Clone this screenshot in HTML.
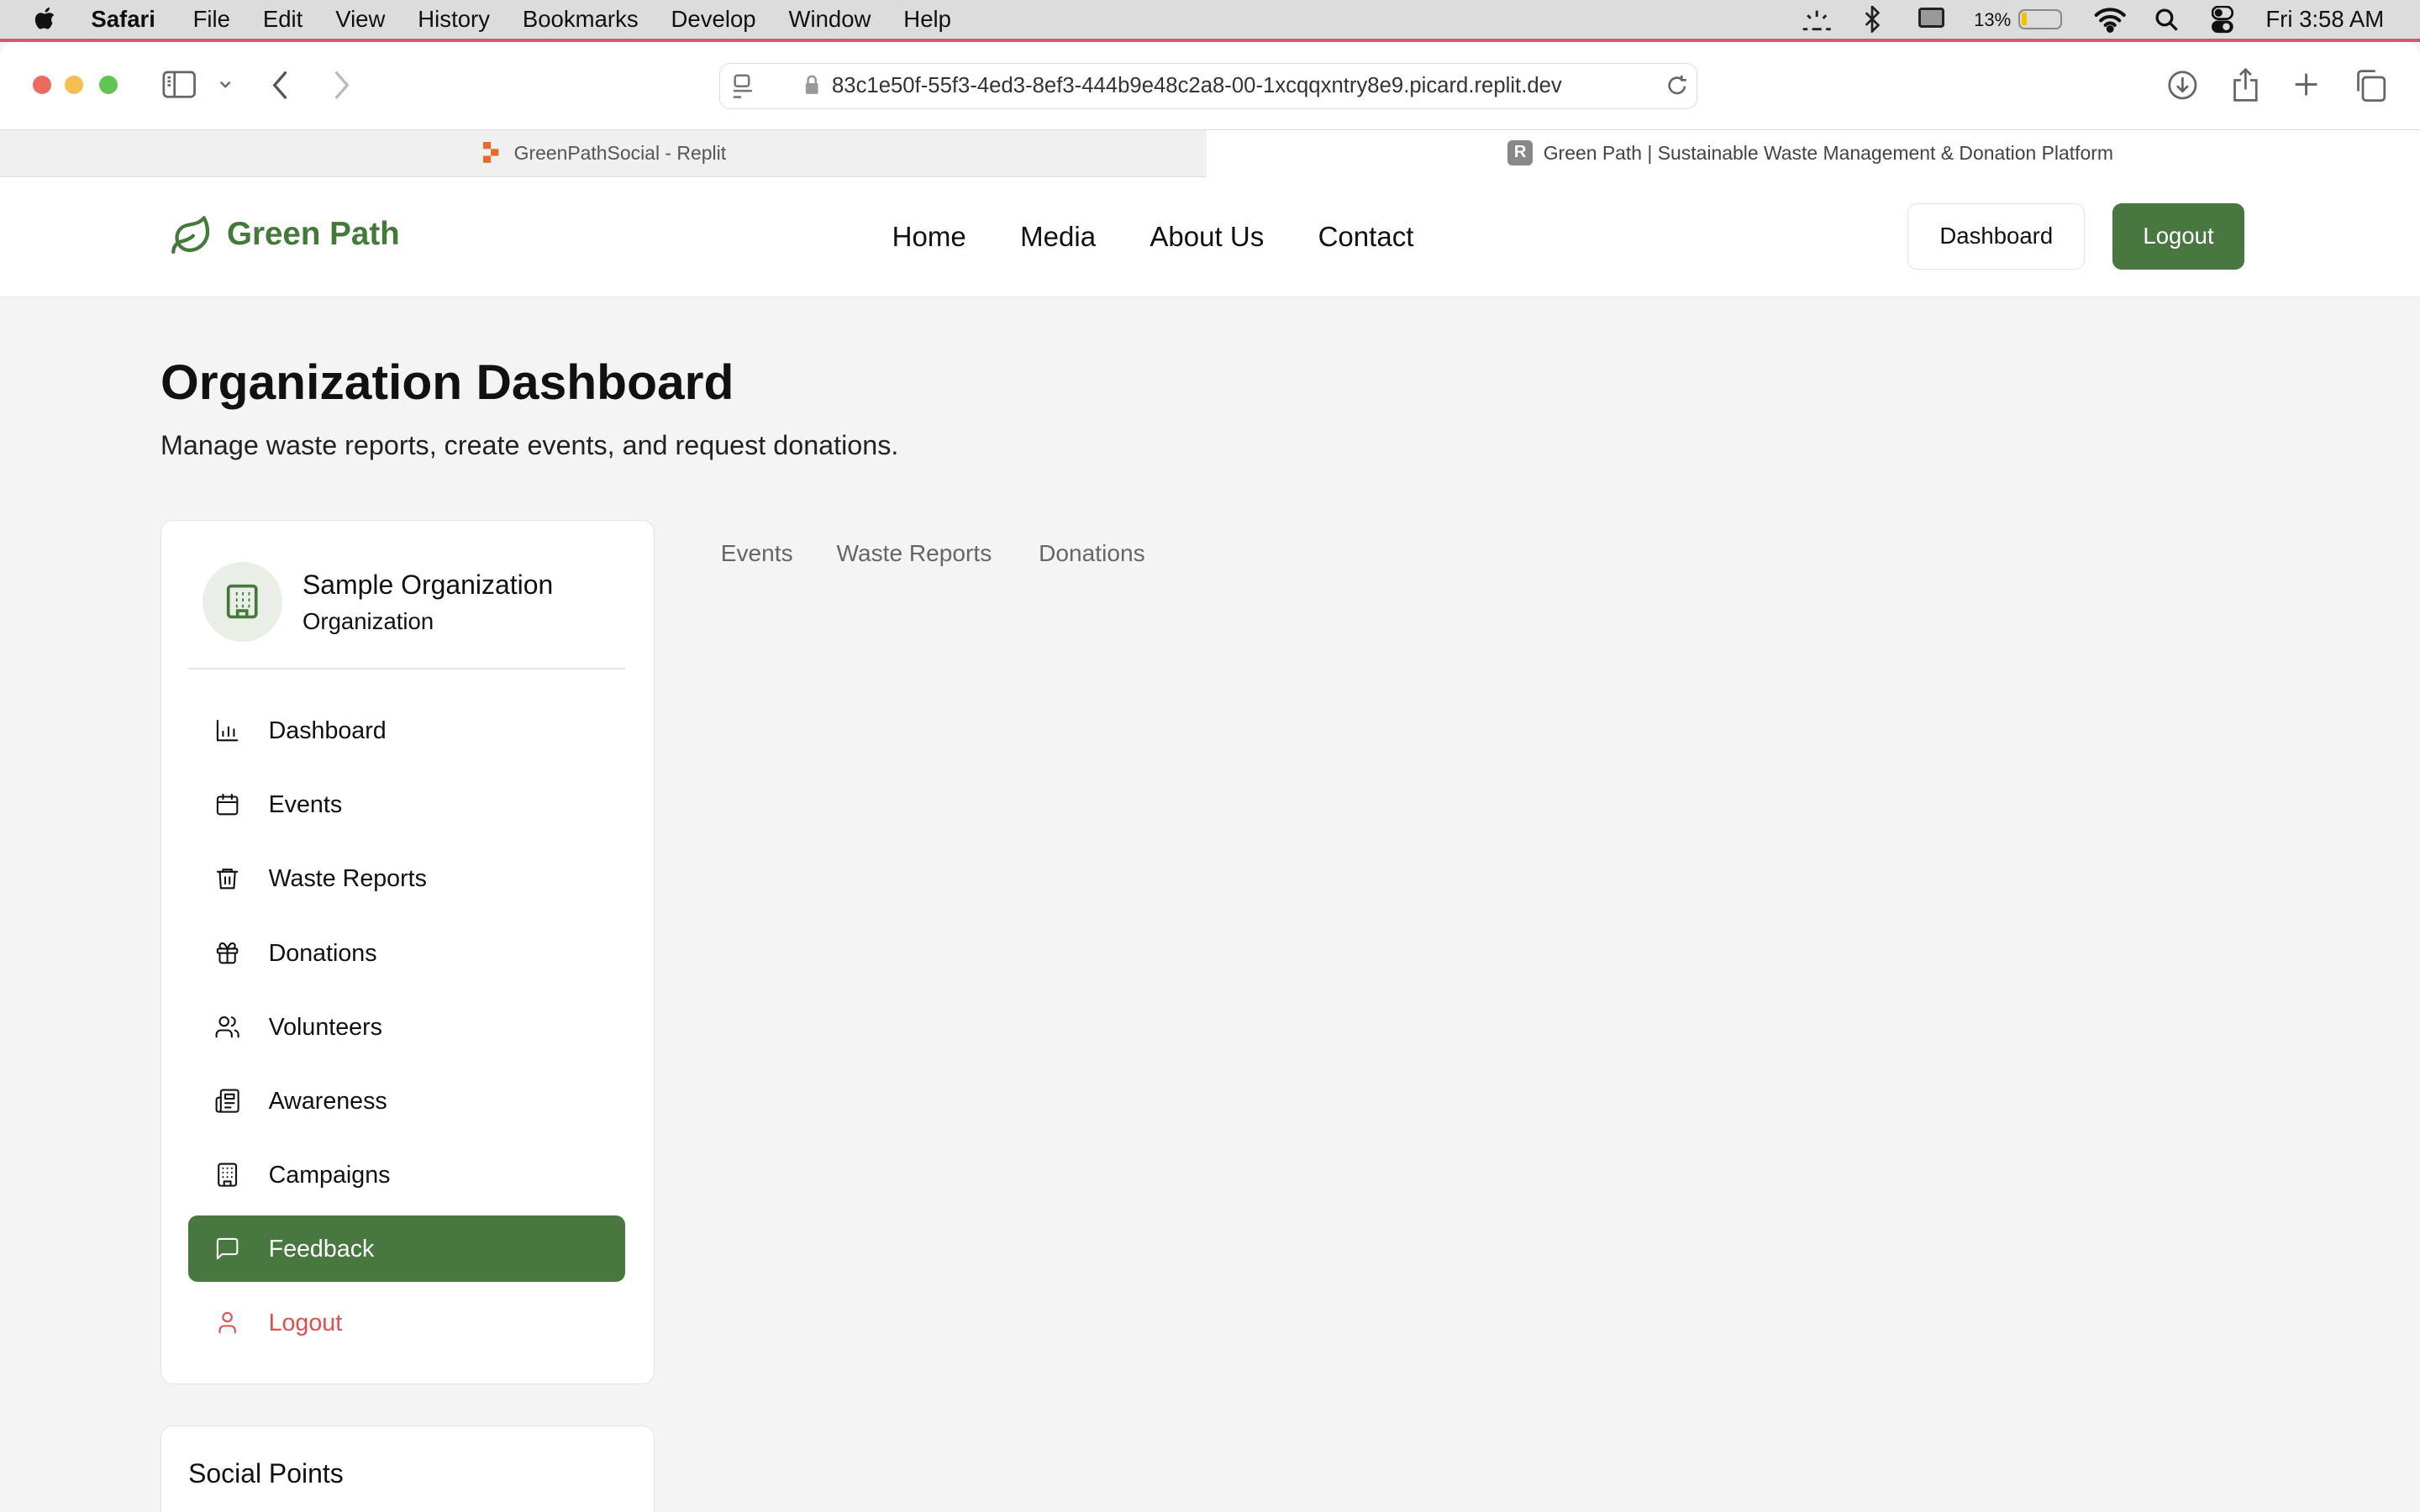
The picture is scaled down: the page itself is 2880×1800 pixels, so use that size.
<!DOCTYPE html>
<html><head><meta charset="utf-8"><style>
*{margin:0;padding:0;box-sizing:border-box}
html,body{width:2880px;height:1800px;overflow:hidden;background:#f4f4f4}
#r{zoom:1.83673;width:1568px;height:980px;position:relative;font-family:"Liberation Sans",sans-serif;color:#111}
.a{position:absolute;white-space:nowrap}
svg{position:absolute}
.mi{position:absolute;left:174px;font-size:15.6px;color:#111}
.ic{left:139px;width:17px;height:17px;fill:none;stroke:#111;stroke-width:1.6;stroke-linecap:round;stroke-linejoin:round}
</style></head><body><div id="r">
<!-- menubar -->
<div class="a" style="left:0;top:0;width:1568px;height:25px;background:#dcdcdc"></div>
<svg style="left:22px;top:4px" width="14" height="17" viewBox="0 0 14 17"><path d="M11.5 9c0-2 1.6-2.9 1.7-3-1-1.4-2.4-1.5-2.9-1.5-1.2-.1-2.4.7-3 .7s-1.6-.7-2.6-.7C3.300 4.500 1 5.600 1 9c0 1.5.5 3 1.200 4.100.6.9 1.300 1.900 2.200 1.900.9 0 1.200-.6 2.300-.6s1.400.6 2.300.6c1 0 1.600-.9 2.200-1.800.7-1 1-2 1-2.100C12.200 11 11.500 10.300 11.500 9zM9.600 3.200C10.100 2.600 10.400 1.800 10.300 1c-.7 0-1.600.5-2.100 1.100-.5.5-.9 1.300-.8 2.100.8.1 1.600-.4 2.200-1z" fill="#111"/></svg>
<div class="a" style="left:59px;top:4px;font-size:15px;font-weight:bold">Safari</div>
<div class="a" style="left:125px;top:4px;font-size:15px;word-spacing:17px">File Edit View History Bookmarks Develop Window Help</div>
<svg style="left:1166px;top:5px" width="22" height="16" viewBox="0 0 22 16" stroke="#222" stroke-width="1.6" fill="none"><path d="M11 2v4M5 5l2 2M17 5l-2 2M2 14h3M8 14h6M17 14h3"/></svg>
<svg style="left:1207px;top:4px" width="12" height="17" viewBox="0 0 12 17" stroke="#222" stroke-width="1.5" fill="none"><path d="M2 4.5l8 8-4 4V.5l4 4-8 8"/></svg>
<div class="a" style="left:1279px;top:6px;font-size:12px">13%</div>
<div class="a" style="left:1308px;top:6px;width:28px;height:13px;border:1.5px solid #888;border-radius:4px"><div style="width:3px;height:8px;margin:1px;background:#f2c200"></div></div>
<div class="a" style="left:1243px;top:5px;width:17px;height:13px;background:#999;border:2px solid #222;border-radius:2px"></div>
<svg style="left:1356px;top:4px" width="22" height="17" viewBox="0 0 22 17" fill="none" stroke="#111" stroke-width="2.2" stroke-linecap="round"><path d="M2 6a13 13 0 0 1 18 0M5 9.5a8.500 8.500 0 0 1 12 0M8 12.500a4 4 0 0 1 6 0"/><circle cx="11" cy="15" r="1.3" fill="#111"/></svg>
<svg style="left:1396px;top:5px" width="16" height="16" viewBox="0 0 16 16" fill="none" stroke="#111" stroke-width="1.8"><circle cx="6.500" cy="6.500" r="4.800"/><path d="M10 10l4.500 4.500"/></svg>
<svg style="left:1433px;top:4px" width="14" height="18" viewBox="0 0 14 18"><rect x="0.500" y="0.500" width="13" height="8" rx="4" fill="none" stroke="#111" stroke-width="1.5"/><circle cx="4.500" cy="4.500" r="2.500" fill="#111"/><rect x="0" y="9.500" width="14" height="8" rx="4" fill="#111"/><circle cx="9.500" cy="13.500" r="2.300" fill="#dcdcdc"/></svg>
<div class="a" style="left:1468px;top:4px;font-size:15px">Fri 3:58 AM</div>
<!-- safari toolbar -->
<div class="a" style="left:0;top:25px;width:1568px;height:2px;background:#d45a72"></div>
<div class="a" style="left:0;top:27px;width:1568px;height:57px;background:#fff;border-radius:10px 10px 0 0"></div>
<div class="a" style="left:21px;top:49px;width:12px;height:12px;border-radius:50%;background:#ec6a5e"></div>
<div class="a" style="left:42px;top:49px;width:12px;height:12px;border-radius:50%;background:#f4bf4f"></div>
<div class="a" style="left:64px;top:49px;width:12px;height:12px;border-radius:50%;background:#61c554"></div>
<svg style="left:105px;top:46px" width="22" height="18" viewBox="0 0 22 18" fill="none" stroke="#666" stroke-width="1.5"><rect x="1" y="1" width="20" height="16" rx="2.500"/><path d="M8 1v16M3.500 4.500h2M3.500 7h2M3.500 9.500h2"/></svg>
<svg style="left:141px;top:51px" width="10" height="7" viewBox="0 0 10 7" fill="none" stroke="#666" stroke-width="1.3"><path d="M2 2l3 3 3-3"/></svg>
<svg style="left:176px;top:45px" width="12" height="20" viewBox="0 0 12 20" fill="none" stroke="#555" stroke-width="1.8" stroke-linecap="round"><path d="M9 2L2 10l7 8"/></svg>
<svg style="left:215px;top:45px" width="12" height="20" viewBox="0 0 12 20" fill="none" stroke="#bbb" stroke-width="1.8" stroke-linecap="round"><path d="M3 2l7 8-7 8"/></svg>
<div class="a" style="left:466px;top:41px;width:634px;height:30px;border:1px solid #ddd;border-radius:7px;background:#fff"></div>
<svg style="left:474px;top:48px" width="14" height="17" viewBox="0 0 14 17" fill="none" stroke="#777" stroke-width="1.4"><rect x="2" y="1" width="9" height="7" rx="1.500"/><path d="M1 11h12M1 15h5"/></svg>
<svg style="left:521px;top:48px" width="10" height="14" viewBox="0 0 10 14"><path d="M2.500 6V4a2.500 2.500 0 0 1 5 0v2" fill="none" stroke="#999" stroke-width="1.400"/><rect x="1" y="6" width="8" height="7" rx="1" fill="#999"/></svg>
<div class="a" style="left:539px;top:48px;font-size:14px;color:#333">83c1e50f-55f3-4ed3-8ef3-444b9e48c2a8-00-1xcqqxntry8e9.picard.replit.dev</div>
<svg style="left:1079px;top:48px" width="15" height="15" viewBox="0 0 15 15" fill="none" stroke="#666" stroke-width="1.4"><path d="M12.500 8a5 5 0 1 1-2-4.500M10.500 1v3h3"/></svg>
<svg style="left:1404px;top:45px" width="20" height="20" viewBox="0 0 20 20" fill="none" stroke="#666" stroke-width="1.5"><circle cx="10" cy="10" r="8.500"/><path d="M10 5v9M6.500 10.500L10 14l3.500-3.500"/></svg>
<svg style="left:1445px;top:43px" width="20" height="24" viewBox="0 0 20 24" fill="none" stroke="#666" stroke-width="1.5"><path d="M7 9H3v13h14V9h-4M10 2v13M6.500 5.500L10 2l3.500 3.500"/></svg>
<svg style="left:1485px;top:46px" width="18" height="18" viewBox="0 0 18 18" fill="none" stroke="#666" stroke-width="1.6"><path d="M9 2v14M2 9h14"/></svg>
<svg style="left:1525px;top:44px" width="22" height="22" viewBox="0 0 22 22" fill="none" stroke="#666" stroke-width="1.5"><rect x="6" y="6" width="14" height="15" rx="2"/><path d="M3 15V4a2 2 0 0 1 2-2h9"/></svg>
<!-- tabs -->
<div class="a" style="left:0;top:84px;width:782px;height:31px;background:#f0f0f0;border-top:1px solid #ddd;border-bottom:1px solid #ddd"></div>
<div class="a" style="left:782px;top:84px;width:786px;height:31px;background:#fff;border-top:1px solid #ddd"></div>
<svg style="left:313px;top:92px" width="12" height="14" viewBox="0 0 12 14" fill="#e8692c"><rect x="0" y="0" width="5" height="4.500"/><rect x="5" y="4.500" width="5" height="4.500"/><rect x="0" y="9" width="5" height="4.500"/></svg>
<div class="a" style="left:333px;top:92px;font-size:12.5px;color:#555">GreenPathSocial - Replit</div>
<div class="a" style="left:977px;top:91px;width:16px;height:16px;background:#888;border-radius:3px;color:#fff;font-size:11px;text-align:center;line-height:16px;font-weight:bold">R</div>
<div class="a" style="left:1000px;top:92px;font-size:12.5px;color:#444">Green Path | Sustainable Waste Management &amp; Donation Platform</div>
<!-- site nav -->
<div class="a" style="left:0;top:115px;width:1568px;height:78px;background:#fff;border-bottom:1px solid #e5e5e5"></div>
<svg style="left:110px;top:139px" width="28" height="28" viewBox="0 0 24 24" fill="none" stroke="#437a3a" stroke-width="2" stroke-linecap="round" stroke-linejoin="round"><path d="M11 20A7 7 0 0 1 9.8 6.1C15.5 5 17 4.48 19 2c1 2 2 4.18 2 8 0 5.5-4.78 10-10 10Z"/><path d="M2 21c0-3 1.85-5.36 5.08-6C9.5 14.52 12 13 13 12"/></svg>
<div class="a" style="left:147px;top:140px;font-size:21px;font-weight:bold;color:#437a3a">Green Path</div>
<div class="a" style="left:578px;top:144px;font-size:18px">Home</div>
<div class="a" style="left:661px;top:144px;font-size:18px">Media</div>
<div class="a" style="left:745px;top:144px;font-size:18px">About Us</div>
<div class="a" style="left:854px;top:144px;font-size:18px">Contact</div>
<div class="a" style="left:1236px;top:132px;width:115px;height:43px;border:1px solid #e2e2e2;border-radius:6px;background:#fff;font-size:15px;text-align:center;line-height:41px">Dashboard</div>
<div class="a" style="left:1369px;top:132px;width:85px;height:43px;border-radius:6px;background:#48773f;color:#fff;font-size:15px;text-align:center;line-height:43px">Logout</div>
<!-- heading -->
<div class="a" style="left:104px;top:230px;font-size:32px;font-weight:bold">Organization Dashboard</div>
<div class="a" style="left:104px;top:279px;font-size:17.6px;color:#222">Manage waste reports, create events, and request donations.</div>
<!-- sidebar -->
<div class="a" style="left:104px;top:337px;width:320px;height:560px;background:#fff;border:1px solid #e4e4e4;border-radius:8px"></div>
<div class="a" style="left:131px;top:364px;width:52px;height:52px;border-radius:50%;background:#e9efe7"></div>
<svg style="left:146px;top:378px" width="22" height="24" viewBox="0 0 22 24" fill="none" stroke="#437a3a" stroke-width="2"><rect x="2" y="2" width="18" height="20" rx="2"/><path d="M8 22v-4h6v4" /><path d="M7 7h1M11 7h1M15 7h1M7 11h1M11 11h1M15 11h1M7 15h1M11 15h1M15 15h1"/></svg>
<div class="a" style="left:196px;top:369px;font-size:17.4px">Sample Organization</div>
<div class="a" style="left:196px;top:394px;font-size:15px">Organization</div>
<div class="a" style="left:122px;top:433px;width:283px;height:1px;background:#e4e4e4"></div>

<svg class="ic" style="top:465px" viewBox="0 0 24 24"><path d="M3 3v18h18M8 17v-4M13 17V9M18 17v-6"/></svg>
<div class="mi" style="top:465px">Dashboard</div>
<svg class="ic" style="top:513px" viewBox="0 0 24 24"><rect x="3" y="5" width="18" height="16" rx="2"/><path d="M8 3v4M16 3v4M3 10h18"/></svg>
<div class="mi" style="top:513px">Events</div>
<svg class="ic" style="top:561px" viewBox="0 0 24 24"><path d="M3 6h18M8 6V4h8v2M5 6l1 15h12l1-15M10 11v6M14 11v6"/></svg>
<div class="mi" style="top:561px">Waste Reports</div>
<svg class="ic" style="top:609px" viewBox="0 0 24 24"><rect x="3" y="8" width="18" height="4" rx="1"/><path d="M12 8v13M19 12v7a2 2 0 0 1-2 2H7a2 2 0 0 1-2-2v-7M7.5 8a2.5 2.5 0 0 1 0-5C10 3 12 8 12 8s2-5 4.5-5a2.5 2.5 0 0 1 0 5"/></svg>
<div class="mi" style="top:609px">Donations</div>
<svg class="ic" style="top:657px" viewBox="0 0 24 24"><path d="M16 21v-2a4 4 0 0 0-4-4H6a4 4 0 0 0-4 4v2"/><circle cx="9" cy="7" r="4"/><path d="M22 21v-2a4 4 0 0 0-3-3.87M16 3.13a4 4 0 0 1 0 7.75"/></svg>
<div class="mi" style="top:657px">Volunteers</div>
<svg class="ic" style="top:705px" viewBox="0 0 24 24"><path d="M4 22h16a2 2 0 0 0 2-2V4a2 2 0 0 0-2-2H8a2 2 0 0 0-2 2v16a2 2 0 0 1-4 0v-9c0-1.1.9-2 2-2h2M18 14h-8M15 18h-5M10 6h8v4h-8z"/></svg>
<div class="mi" style="top:705px">Awareness</div>
<svg class="ic" style="top:753px" viewBox="0 0 24 24"><rect x="4" y="2" width="16" height="20" rx="2"/><path d="M9 22v-4h6v4M8 6h.01M12 6h.01M16 6h.01M8 10h.01M12 10h.01M16 10h.01M8 14h.01M12 14h.01M16 14h.01"/></svg>
<div class="mi" style="top:753px">Campaigns</div>
<div class="a" style="left:122px;top:788px;width:283px;height:43px;background:#48773f;border-radius:6px"></div>
<svg class="ic" style="top:801px;stroke:#fff" viewBox="0 0 24 24"><path d="M21 15a2 2 0 0 1-2 2H7l-4 4V5a2 2 0 0 1 2-2h14a2 2 0 0 1 2 2z"/></svg>
<div class="mi" style="top:801px;color:#fff">Feedback</div>
<svg class="ic" style="top:849px;stroke:#e04e4e" viewBox="0 0 24 24"><path d="M19 21v-2a4 4 0 0 0-4-4H9a4 4 0 0 0-4 4v2"/><circle cx="12" cy="7" r="4"/></svg>
<div class="mi" style="top:849px;color:#e04e4e">Logout</div>

<div class="a" style="left:104px;top:924px;width:320px;height:80px;background:#fff;border:1px solid #e4e4e4;border-radius:8px"></div>
<div class="a" style="left:122px;top:945px;font-size:17.4px">Social Points</div>
<!-- tabs -->
<div class="a" style="left:467px;top:350px;font-size:15.3px;color:#666">Events</div>
<div class="a" style="left:542px;top:350px;font-size:15.3px;color:#666">Waste Reports</div>
<div class="a" style="left:673px;top:350px;font-size:15.3px;color:#666">Donations</div>
</div></body></html>
